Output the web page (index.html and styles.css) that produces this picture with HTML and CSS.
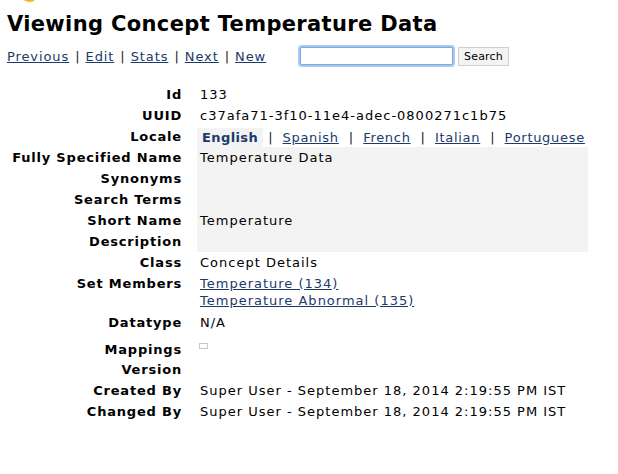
FILE: index.html
```html
<!DOCTYPE html>
<html>
<head>
<meta charset="utf-8">
<link rel="stylesheet" href="styles.css">
</head>
<body>
<div class="logo-peek"></div>
<h2 class="title">Viewing Concept Temperature Data</h2>
<div class="toolbar">
  <nav class="nav">
    <a href="#">Previous</a><span class="sep">|</span><a href="#">Edit</a><span class="sep">|</span><a href="#">Stats</a><span class="sep">|</span><a href="#">Next</a><span class="sep">|</span><a href="#">New</a>
  </nav>
  <form class="search">
    <input class="search-input" type="text">
    <button class="search-btn" type="button">Search</button>
  </form>
</div>
<table class="concept">
  <tr><th>Id</th><td>133</td></tr>
  <tr><th>UUID</th><td>c37afa71-3f10-11e4-adec-0800271c1b75</td></tr>
  <tr class="locale-row"><th>Locale</th><td>
    <div class="tabs"><span class="tab active">English</span><span class="sep">|</span><a class="tab" href="#">Spanish</a><span class="sep">|</span><a class="tab" href="#">French</a><span class="sep">|</span><a class="tab" href="#">Italian</a><span class="sep">|</span><a class="tab" href="#">Portuguese</a></div>
  </td></tr>
  <tr class="loc"><th>Fully Specified Name</th><td>Temperature Data</td></tr>
  <tr class="loc"><th>Synonyms</th><td></td></tr>
  <tr class="loc"><th>Search Terms</th><td></td></tr>
  <tr class="loc"><th>Short Name</th><td>Temperature</td></tr>
  <tr class="loc"><th>Description</th><td></td></tr>
  <tr><th>Class</th><td>Concept Details</td></tr>
  <tr class="members-row"><th>Set Members</th><td><a href="#">Temperature (134)</a><br><a href="#">Temperature Abnormal (135)</a></td></tr>
  <tr><th>Datatype</th><td>N/A</td></tr>
  <tr class="map-row"><th>Mappings</th><td><div class="map-box"></div></td></tr>
  <tr><th>Version</th><td></td></tr>
  <tr><th>Created By</th><td>Super User - September 18, 2014 2:19:55 PM IST</td></tr>
  <tr><th>Changed By</th><td>Super User - September 18, 2014 2:19:55 PM IST</td></tr>
</table>
</body>
</html>
```
FILE: styles.css
```css
html, body {
  margin: 0;
  padding: 0;
  background: #fff;
}
body {
  font-family: "DejaVu Sans", Verdana, sans-serif;
  font-size: 13px;
  letter-spacing: 1px;
  color: #000;
  padding: 0 7px;
  position: relative;
}
a {
  color: #1b3a69;
  text-decoration: underline;
}
.logo-peek {
  position: absolute;
  left: 21px;
  top: -14px;
  width: 17px;
  height: 16px;
  border-radius: 50%;
  background: #f5b21c;
}
.title {
  font-size: 21px;
  font-weight: bold;
  letter-spacing: 0.35px;
  margin: 0;
  padding-top: 11px;
  line-height: 26px;
}
.toolbar {
  display: flex;
  align-items: center;
  margin-top: 7px;
  height: 24px;
}
.nav {
  width: 293px;
  line-height: 17px;
  letter-spacing: 0.9px;
}
.sep {
  margin: 0 6px;
  color: #222;
  letter-spacing: 0;
}
.search {
  display: flex;
  align-items: center;
  margin: 0;
}
.search-input {
  width: 147px;
  height: 16px;
  padding: 0 2px;
  border: 1px solid #7aa7e0;
  box-shadow: 0 0 0 2px #a9c8f3;
  border-radius: 2px;
  outline: none;
  margin: 0;
}
.search-btn {
  margin-left: 5px;
  height: 19px;
  padding: 0 5px;
  font-family: "DejaVu Sans", Verdana, sans-serif;
  font-size: 11px;
  letter-spacing: 0.2px;
  background: #f3f3f3;
  border: 1px solid #cfcfcf;
  border-radius: 0;
  color: #000;
}
.concept {
  border-collapse: collapse;
  table-layout: fixed;
  width: 581px;
  margin-top: 16px;
}
.concept th {
  text-align: right;
  font-weight: bold;
  letter-spacing: 0.8px;
  padding: 2px 15px 2px 0;
  width: 175px;
  line-height: 17px;
  white-space: nowrap;
  vertical-align: top;
}
.concept td {
  padding: 2px 0 2px 3px;
  line-height: 17px;
  width: 388px;
  vertical-align: top;
  height: 17px;
  white-space: nowrap;
}
.concept tr.loc td {
  background: #f3f3f3;
}
.members-row td {
  padding-bottom: 3px;
}
.locale-row td {
  padding: 2px 0 0 0;
}
.tabs {
  display: flex;
  align-items: center;
  height: 19px;
}
.tab {
  padding: 0 5px;
  line-height: 19px;
  letter-spacing: 0.7px;
}
.tab.active {
  background: #f3f3f3;
  font-weight: bold;
  letter-spacing: 0.4px;
  color: #1b3a69;
}
.tabs .sep {
  margin: 0 5px;
}
.map-row th {
  padding-top: 8px;
  padding-bottom: 1px;
}
.concept .map-row td {
  padding-top: 10px;
  padding-bottom: 0;
  height: 16px;
}
.map-box {
  width: 7px;
  height: 4px;
  border: 1px solid #c8c8c8;
  margin-left: -1px;
}
```
